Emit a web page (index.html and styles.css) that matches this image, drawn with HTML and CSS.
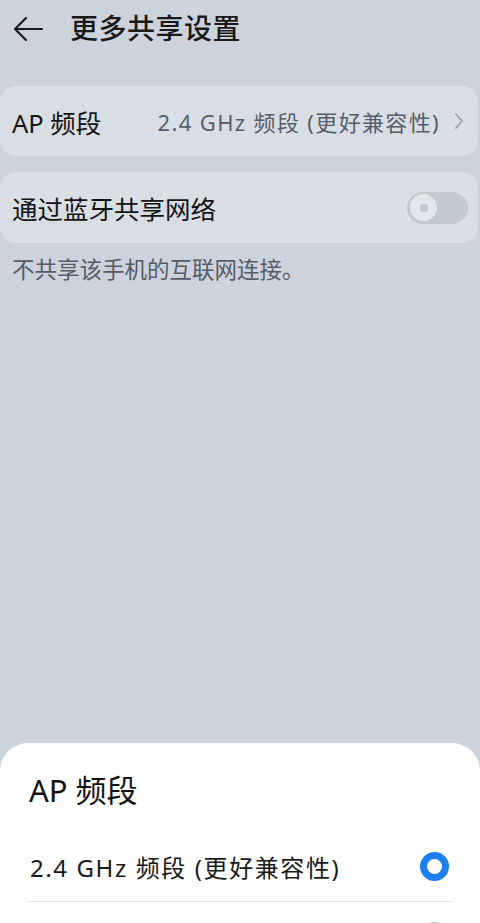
FILE: index.html
```html
<!DOCTYPE html>
<html lang="zh-CN">
<head>
<meta charset="utf-8">
<title>更多共享设置</title>
<link rel="stylesheet" href="styles.css">
</head>
<body>
<div class="page">
  <header class="topbar">
    <svg class="back" width="30" height="26" viewBox="0 0 30 26" aria-hidden="true">
      <path d="M13 2 L2 13 L13 24 M2 13 H29" fill="none" stroke="#1b1b1b" stroke-width="2.2" stroke-linecap="round" stroke-linejoin="round"/>
    </svg>
    <h1 class="title">更多共享设置</h1>
  </header>

  <section class="card">
    <span class="label">AP 频段</span>
    <span class="value">2.4 GHz 频段 (更好兼容性)</span>
    <svg class="chev" width="10" height="18" viewBox="0 0 10 18" aria-hidden="true">
      <path d="M2 2 L8 9 L2 16" fill="none" stroke="#9aa0a8" stroke-width="1.8" stroke-linecap="round" stroke-linejoin="round"/>
    </svg>
  </section>

  <section class="card">
    <span class="label">通过蓝牙共享网络</span>
    <span class="toggle"><span class="knob"><span class="dot"></span></span></span>
  </section>

  <p class="hint">不共享该手机的互联网连接。</p>
</div>

<div class="sheet">
  <h2 class="sheet-title">AP 频段</h2>
  <div class="option">
    <span class="opt-text">2.4 GHz 频段 (更好兼容性)</span>
    <span class="radio on"></span>
  </div>
  <div class="option">
    <span class="opt-text">5 GHz 频段 (更快传输速度)</span>
    <span class="radio"></span>
  </div>
</div>
</body>
</html>
```

FILE: styles.css
```css
* { box-sizing: border-box; }
html, body {
  margin: 0;
  padding: 0;
  width: 480px;
  height: 923px;
  overflow: hidden;
}
body {
  background: #cdd3dc;
  font-family: "Noto Sans", Roboto, "Noto Sans CJK SC", sans-serif;
  color: #1a1a1a;
  position: relative;
}
.page {
  display: flex;
  flex-direction: column;
}
.topbar {
  height: 56px;
  display: flex;
  align-items: center;
  padding-left: 13px;
}
.back { display: block; margin-top: 1px; }
.title {
  margin: 0 0 0 27px;
  font-size: 28px;
  font-weight: 500;
  line-height: 56px;
  letter-spacing: 0.5px;
}
.card {
  margin-top: 30px;
  width: 478px;
  height: 70px;
  background: #d9dde4;
  border-radius: 16px;
  display: flex;
  align-items: center;
  padding: 0 14px 0 12px;
}
.card + .card { margin-top: 16px; height: 71px; }
.label {
  font-size: 25.5px;
  font-weight: 400;
  flex: 1;
  color: #141414;
}
.value {
  font-size: 22px;
  color: #575e68;
  margin-right: 14px;
  letter-spacing: 1.35px;
}
.chev { display: block; }
.toggle {
  width: 61px;
  height: 32px;
  border-radius: 16px;
  background: #c3c9d2;
  position: relative;
  margin-right: -4px;
  display: flex;
  align-items: center;
  padding-left: 3px;
}
.knob {
  width: 27px;
  height: 27px;
  border-radius: 50%;
  background: #e3e6ea;
  display: flex;
  align-items: center;
  justify-content: center;
}
.dot {
  width: 8px;
  height: 8px;
  border-radius: 50%;
  background: #c2c7ce;
}
.hint {
  margin: 15px 0 0 12px;
  font-size: 22.5px;
  color: #565c66;
  line-height: 24px;
}
.sheet {
  position: absolute;
  left: 0;
  top: 743px;
  width: 480px;
  height: 260px;
  background: #ffffff;
  border-radius: 28px 28px 0 0;
  padding: 0 27px;
}
.sheet-title {
  margin: 0;
  font-size: 31px;
  font-weight: 400;
  line-height: 34px;
  padding: 30px 0 0 2px;
  color: #141414;
}
.option {
  height: 70px;
  display: flex;
  align-items: center;
  border-bottom: 1px solid #e8e8ea;
  padding-left: 3px;
  margin-top: 25px;
}
.option + .option { margin-top: 0; }
.opt-text {
  flex: 1;
  font-size: 24px;
  color: #1a1a1a;
  letter-spacing: 1.6px;
}
.radio {
  width: 29px;
  height: 29px;
  border-radius: 50%;
  border: 2px solid #b8bcc2;
  margin-right: 4px;
}
.radio.on {
  border: 7px solid #1f7ff0;
}
```
